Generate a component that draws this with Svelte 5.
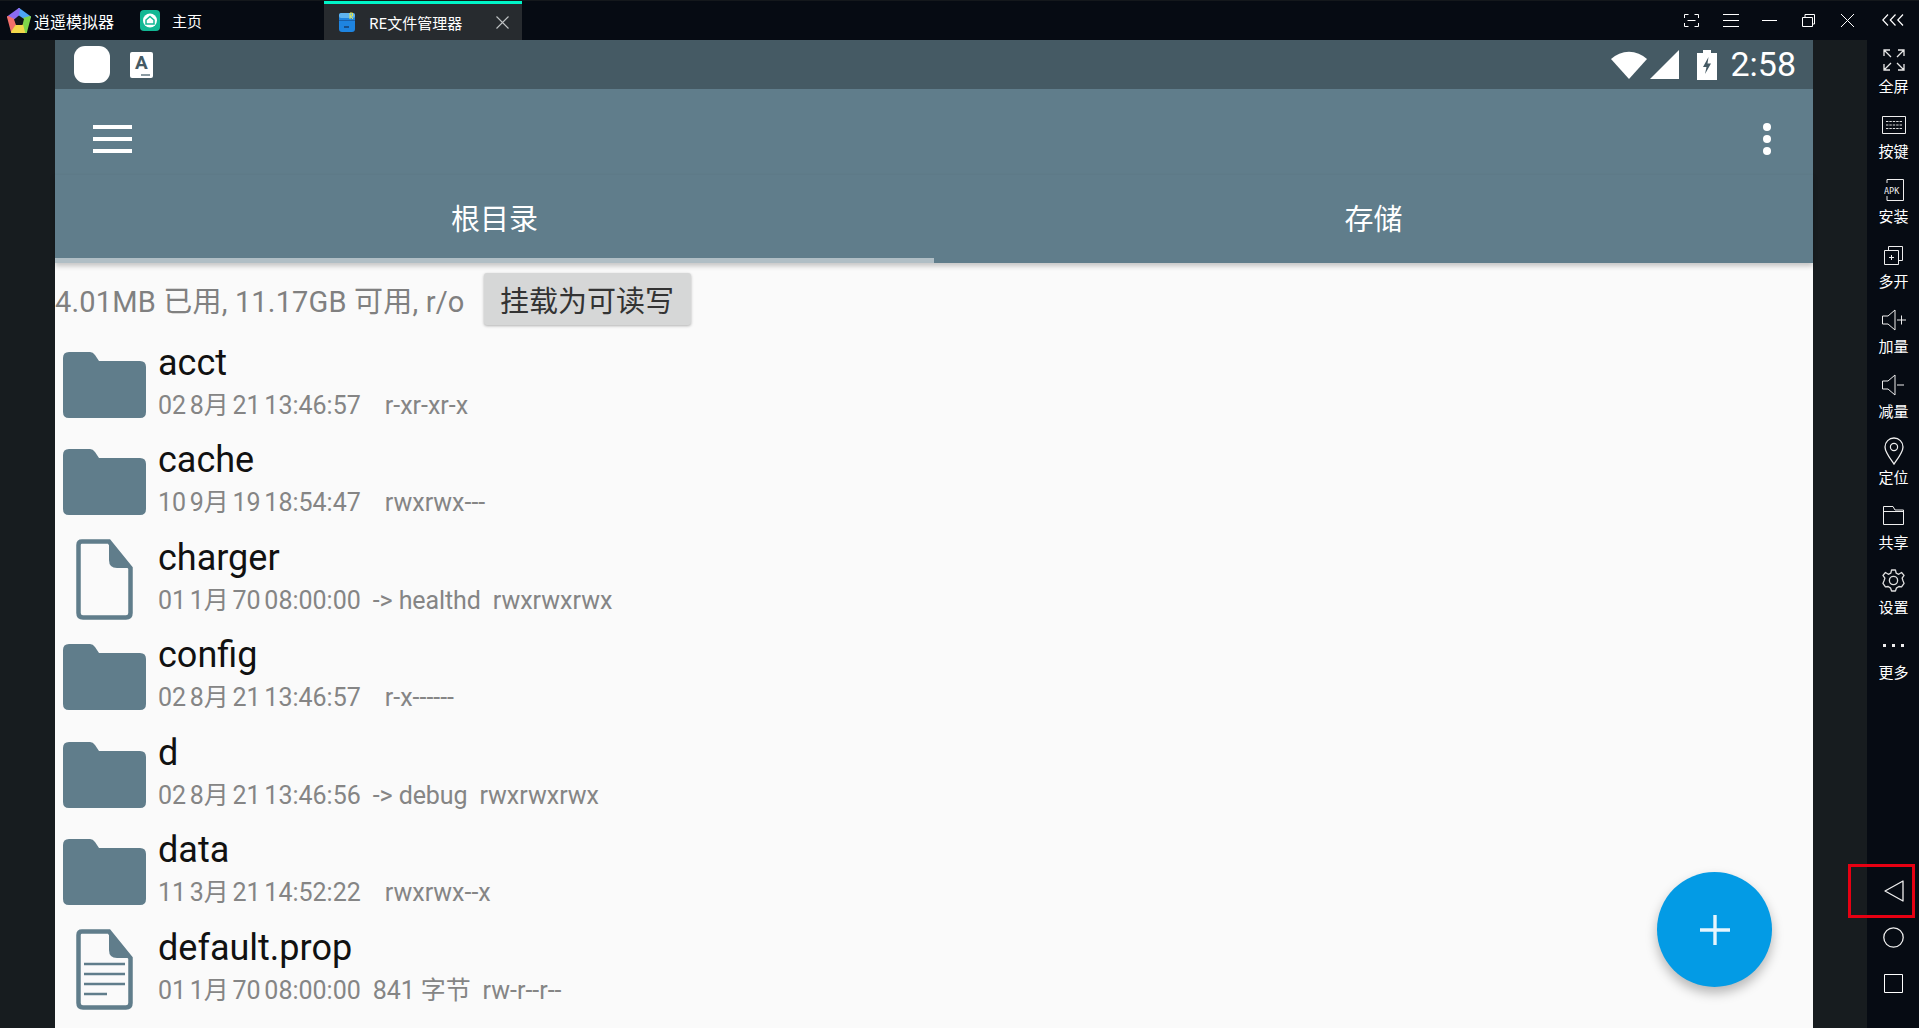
<script>
const rail = [
  { label: '全屏', icon: 'full' },
  { label: '按键', icon: 'keys' },
  { label: '安装', icon: 'apk' },
  { label: '多开', icon: 'multi' },
  { label: '加量', icon: 'volup' },
  { label: '减量', icon: 'voldown' },
  { label: '定位', icon: 'pin' },
  { label: '共享', icon: 'share' },
  { label: '设置', icon: 'gear' },
  { label: '更多', icon: 'more' }
];

const files = [
  { name: 'acct', kind: 'folder', date: '02 8月 21 13:46:57', link: '', perm: 'r-xr-xr-x' },
  { name: 'cache', kind: 'folder', date: '10 9月 19 18:54:47', link: '', perm: 'rwxrwx---' },
  { name: 'charger', kind: 'file', date: '01 1月 70 08:00:00', link: '-> healthd', perm: 'rwxrwxrwx' },
  { name: 'config', kind: 'folder', date: '02 8月 21 13:46:57', link: '', perm: 'r-x------' },
  { name: 'd', kind: 'folder', date: '02 8月 21 13:46:56', link: '-> debug', perm: 'rwxrwxrwx' },
  { name: 'data', kind: 'folder', date: '11 3月 21 14:52:22', link: '', perm: 'rwxrwx--x' },
  { name: 'default.prop', kind: 'text', date: '01 1月 70 08:00:00', link: '841 字节', perm: 'rw-r--r--' }
];
</script>

<div class="emu">
  <header class="topbar">
    <div class="brand">
      <svg class="logo" viewBox="0 0 26 27" width="26" height="27">
        <g stroke-width="2" stroke-linejoin="round">
          <path d="M13 2 L24 10 L17 12 L12 8Z" fill="#4da6f5" stroke="#4da6f5"/>
          <path d="M13 2 L2 10 L8 13 L12 8Z" fill="#8b6cf0" stroke="#8b6cf0"/>
          <path d="M2 10 L6 25 L10 19 L8 13Z" fill="#f2706a" stroke="#f2706a"/>
          <path d="M6 25 L20 25 L18 17 L10 19Z" fill="#f2d84a" stroke="#f2d84a"/>
          <path d="M20 25 L24 10 L17 12 L18 17Z" fill="#7fd64a" stroke="#7fd64a"/>
        </g>
        <path d="M13 8.5 L18 12 L16.5 18 L10 18 L8 12.5Z" fill="#10141a"/>
      </svg>
      <span>逍遥模拟器</span>
    </div>
    <div class="home">
      <svg viewBox="0 0 20 21" width="20" height="21">
        <rect width="20" height="21" rx="4" fill="#12b894"/>
        <circle cx="10" cy="10.5" r="7" fill="#fff"/>
        <path d="M10 6.5 L14 10 V14 H6 V10Z" fill="none" stroke="#12b894" stroke-width="1.5"/>
      </svg>
      <span>主页</span>
    </div>
    <div class="tab">
      <svg viewBox="0 0 16 20" width="16" height="20">
        <rect y="1" width="16" height="19" rx="3" fill="#1e84e0"/>
        <rect y="1" width="16" height="5" rx="2" fill="#5fb4f0"/>
        <rect y="8" width="16" height="1" fill="#1a5fa8"/>
        <rect x="5" y="14" width="5" height="2" fill="#164f8c"/>
        <path d="M11 1 V7 M11 1 h2.5 v3 h-2.5 l3 3" fill="none" stroke="#e8e84a" stroke-width="1"/>
      </svg>
      <span class="tab-title">RE文件管理器</span>
      <svg class="tab-x" viewBox="0 0 13 13" width="13" height="13">
        <path d="M0.5 0.5 L12.5 12.5 M12.5 0.5 L0.5 12.5" stroke="#bfc2c4" stroke-width="1.1"/>
      </svg>
    </div>
    <div class="win">
      <svg viewBox="0 0 15 13" width="15" height="13"><path d="M0.5 4V0.5H4.5 M10.5 0.5H14.5V4 M14.5 9V12.5H10.5 M4.5 12.5H0.5V9 M3.5 6.5H11.5" fill="none" stroke="#fff"/></svg>
      <svg class="w-menu" viewBox="0 0 16 13" width="16" height="13"><path d="M0 .5H16 M0 6.5H16 M0 12.5H16" stroke="#fff"/></svg>
      <svg class="w-min" viewBox="0 0 15 13" width="15" height="13"><path d="M0 6.5H15" stroke="#fff"/></svg>
      <svg class="w-max" viewBox="0 0 13 13" width="13" height="13"><path d="M.5 3.5H10.5V12.5H.5Z M3 3V.5H12.5V10H11" fill="none" stroke="#fff"/></svg>
      <svg class="w-close" viewBox="0 0 13 13" width="13" height="13"><path d="M0 0L13 13M13 0L0 13" stroke="#fff"/></svg>
      <svg class="collapse" viewBox="0 0 22 12" width="22" height="12"><path d="M6 .5L.8 6 6 11.5 M13.5 .5L8.3 6 13.5 11.5 M21 .5L15.8 6 21 11.5" fill="none" stroke="#fff" stroke-width="1.2"/></svg>
    </div>
  </header>

  <div class="main">
    <div class="gutter left"></div>

    <section class="android">
      <div class="status">
        <div class="blank"></div>
        <div class="a-note">
          <b>A</b>
          <i></i>
        </div>
        <div class="status-right">
          <svg viewBox="0 0 36 29" width="36" height="29"><path d="M0 9 A 26 26 0 0 1 36 9 L18 29Z" fill="#fff"/></svg>
          <svg class="signal" viewBox="0 0 29 29" width="29" height="29"><path d="M29 0V29H0Z" fill="#fff"/></svg>
          <svg class="batt" viewBox="0 0 20 30" width="20" height="30">
            <path d="M6 0H14V3H20V30H0V3H6Z" fill="#fff"/>
            <path d="M11.5 7L6 17H9.5L8 24L14 13.5H10.5Z" fill="#455a64"/>
          </svg>
          <span class="clock">2:58</span>
        </div>
      </div>

      <div class="toolbar">
        <div class="burger"><span></span><span></span><span></span></div>
        <div class="kebab"><span></span><span></span><span></span></div>
      </div>

      <div class="tabs">
        <div class="tab-item active">根目录</div>
        <div class="tab-item">存储</div>
      </div>

      <div class="content">
        <div class="info">
          <span class="usage">4.01MB 已用, 11.17GB 可用, r/o</span>
          <button>挂载为可读写</button>
        </div>

        <ul class="list">
          {#each files as f}
            <li>
              <div class="thumb">
                {#if f.kind === 'folder'}
                  <svg viewBox="0 0 83 66" width="83" height="66">
                    <path d="M6 0H27Q30 0 32 3L36 9H77Q83 9 83 15V60Q83 66 77 66H6Q0 66 0 60V6Q0 0 6 0Z" fill="#607d8b"/>
                  </svg>
                {:else}
                  <svg class="doc" viewBox="0 0 57 81" width="57" height="81">
                    <path d="M6 2.5H33L54.5 29V74Q54.5 78.5 50 78.5H7Q2.5 78.5 2.5 74V6Q2.5 2.5 6 2.5Z" fill="#fafafa" stroke="#607d8b" stroke-width="4.5"/>
                    <path d="M33 2L55 29H41Q33 29 33 21Z" fill="#607d8b"/>
                    {#if f.kind === 'text'}
                      <path d="M8 35H49 M8 45H49 M8 55H49 M8 65H31" stroke="#607d8b" stroke-width="2.5"/>
                    {/if}
                  </svg>
                {/if}
              </div>
              <div class="meta">
                <div class="name">{f.name}</div>
                <div class="sub">
                  <span class="date">{f.date}</span>
                  <span class="link">{f.link}</span>
                  <span>{f.perm}</span>
                </div>
              </div>
            </li>
          {/each}
        </ul>

        <div class="fab">
          <svg viewBox="0 0 30 30" width="30" height="30"><path d="M15 0V30M0 15H30" stroke="#e6f5fd" stroke-width="3.4"/></svg>
        </div>
      </div>
    </section>

    <div class="gutter right"></div>

    <aside class="rail">
      <div class="rail-top">
        {#each rail as r}
          <div class="rail-item">
            <div class="rail-icon">
              {#if r.icon === 'full'}
                <svg viewBox="0 0 22 22" width="22" height="22"><path d="M1 7V1H7 M1 1L8 8 M15 1H21V7 M21 1L14 8 M1 15V21H7 M1 21L8 14 M15 21H21V15 M21 21L14 14" fill="none" stroke="#e8e8e8" stroke-width="1.3"/></svg>
              {:else if r.icon === 'keys'}
                <svg viewBox="0 0 24 18" width="24" height="18"><path d="M.5 .5H23.5V17.5H.5Z" fill="none" stroke="#eee"/><path d="M4 5.5H20 M4 9H20 M4 12.5H20" stroke="#ddd" stroke-dasharray="2.4 1"/></svg>
              {:else if r.icon === 'apk'}
                <svg viewBox="0 0 20 22" width="20" height="22">
                  <path d="M3 .5H19.5V21.5H3V17 M3 .5V4" fill="none" stroke="#eee"/>
                  <text x="0" y="15" class="apk">APK</text>
                </svg>
              {:else if r.icon === 'multi'}
                <svg viewBox="0 0 19 19" width="19" height="19"><path d="M.5 4.5H14.5V18.5H.5Z M4.5 4V.5H18.5V14.5H15" fill="none" stroke="#eee"/><path d="M5 11.5H10 M7.5 9V14" stroke="#eee"/></svg>
              {:else if r.icon === 'volup'}
                <svg viewBox="0 0 24 22" width="24" height="22"><path d="M.5 7H6L13 1V21L6 15H.5Z" fill="none" stroke="#eee" stroke-linejoin="round"/><path d="M15 11H24 M19.5 6.5V15.5" stroke="#eee"/></svg>
              {:else if r.icon === 'voldown'}
                <svg viewBox="0 0 24 22" width="24" height="22"><path d="M.5 7H6L13 1V21L6 15H.5Z" fill="none" stroke="#eee" stroke-linejoin="round"/><path d="M15 11H22" stroke="#eee"/></svg>
              {:else if r.icon === 'pin'}
                <svg viewBox="0 0 20 28" width="20" height="28"><path d="M10 27C5 20 1 15 1 10A9 9 0 0 1 19 10C19 15 15 20 10 27Z" fill="none" stroke="#eee" stroke-width="1.3"/><circle cx="10" cy="10" r="3.6" fill="none" stroke="#eee" stroke-width="1.2"/></svg>
              {:else if r.icon === 'share'}
                <svg viewBox="0 0 21 19" width="21" height="19"><path d="M.5 .5H10L12 4H20.5V18.5H.5Z M.5 5.5H20.5" fill="none" stroke="#eee"/></svg>
              {:else if r.icon === 'gear'}
                <svg viewBox="0 0 24 24" width="23" height="23"><path d="M10 1H14L14.8 4.4L17.4 5.5L20.4 3.7L23 6.6L21 9.5L21.8 12L23 15L20.4 18.7L17.6 18.3L15 20L14 23H10L9 20L6.4 18.3L3.6 18.7L1 15L2.2 12L3 9.5L1 6.6L3.6 3.7L6.6 5.5L9.2 4.4Z" fill="none" stroke="#ddd" stroke-width="1.4" stroke-linejoin="round"/><circle cx="12" cy="12" r="4.3" fill="none" stroke="#ddd" stroke-width="1.4"/></svg>
              {:else}
                <svg viewBox="0 0 22 4" width="22" height="4"><path d="M0 0H3V3H0Z M9 0H12V3H9Z M18 0H21V3H18Z" fill="#eee"/></svg>
              {/if}
            </div>
            <span>{r.label}</span>
          </div>
        {/each}
      </div>
      <div class="rail-nav">
        <div class="nav-btn">
          <svg viewBox="0 0 20 22" width="20" height="22"><path d="M1 11L19 1V21Z" fill="none" stroke="#eee" stroke-width="1.3" stroke-linejoin="round"/></svg>
        </div>
        <div class="nav-btn">
          <svg viewBox="0 0 21 21" width="21" height="21"><circle cx="10.5" cy="10.5" r="9.7" fill="none" stroke="#eee" stroke-width="1.3"/></svg>
        </div>
        <div class="nav-btn">
          <svg viewBox="0 0 19 19" width="19" height="19"><path d="M.5 .5H18.5V18.5H.5Z" fill="none" stroke="#fff"/></svg>
        </div>
      </div>
      <div class="marker"></div>
    </aside>
  </div>
</div>

<style>
:global(body) {
  margin: 0;
  overflow: hidden;
  background: #060b13;
}

.emu {
  position: relative;
  width: 1919px;
  height: 1028px;
  display: flex;
  flex-direction: column;
  overflow: hidden;
  font-family: "Noto Sans CJK SC", "Liberation Sans", sans-serif;
  color: #fff;
}

/* top bar */
.topbar {
  height: 40px;
  flex: none;
  display: flex;
  background: #060b13;
  border-top: 1px solid #14181c;
  box-sizing: border-box;
  font-size: 15px;
}
.brand {
  width: 140px;
  display: flex;
  align-items: center;
  padding-left: 6px;
  box-sizing: border-box;
  gap: 2px;
}
.brand span { font-size: 16px; white-space: nowrap; }
.home {
  width: 184px;
  display: flex;
  align-items: center;
  gap: 12px;
}
.tab {
  width: 198px;
  display: flex;
  align-items: center;
  background: #272b2f;
  border-top: 3px solid #00f5c8;
  box-sizing: border-box;
  padding-left: 15px;
}
.tab-title { margin-left: 14px; }
.tab-x { margin-left: 34px; }
.win {
  flex: 1;
  display: flex;
  align-items: center;
  justify-content: flex-end;
  padding: 0 15px 1px 0;
}
.w-menu { margin-left: 24px; }
.w-min { margin-left: 23px; }
.w-max { margin-left: 25px; }
.w-close { margin-left: 26px; }
.collapse { margin-left: 28px; }

/* layout */
.main {
  position: relative;
  flex: 1;
  display: flex;
  min-height: 0;
}
.gutter { background: #171c1f; flex: none; }
.gutter.left { width: 55px; }
.gutter.right { width: 54px; }

/* android screen */
.android {
  flex: 1;
  min-width: 0;
  display: flex;
  flex-direction: column;
  background: #fafafa;
  font-family: Roboto, "Noto Sans CJK SC", sans-serif;
}
.status {
  height: 49px;
  flex: none;
  background: #455a64;
  display: flex;
  align-items: center;
  padding: 0 17px 0 19px;
}
.blank {
  width: 36px;
  height: 37px;
  background: #fff;
  border-radius: 11px;
}
.a-note {
  position: relative;
  margin-left: 20px;
  width: 23px;
  height: 26px;
  background: #fff;
  border-radius: 2px;
  color: #455a64;
  text-align: center;
}
.a-note b {
  display: block;
  font-size: 19px;
  line-height: 22px;
}
.a-note i {
  position: absolute;
  right: 3px;
  bottom: 2px;
  width: 9px;
  height: 2px;
  background: #8a9aa2;
}
.status-right {
  margin-left: auto;
  display: flex;
  align-items: center;
}
.signal { margin-left: 3px; }
.batt { margin-left: 18px; }
.clock {
  margin-left: 13.5px;
  font-size: 34px;
  line-height: 49px;
}

.toolbar {
  height: 86px;
  flex: none;
  background: #607d8b;
  display: flex;
  align-items: center;
  justify-content: space-between;
  padding: 14px 42px 0 38px;
  box-sizing: border-box;
}
.burger { display: flex; flex-direction: column; gap: 8px; }
.burger span { width: 39px; height: 4px; background: #fff; }
.kebab { display: flex; flex-direction: column; gap: 4px; }
.kebab span { width: 8px; height: 8px; border-radius: 50%; background: #fff; }

.tabs {
  height: 88px;
  flex: none;
  display: flex;
  background: #607d8b;
  box-shadow: 0 3px 5px rgba(0, 0, 0, 0.22);
  position: relative;
  z-index: 1;
}
.tab-item {
  flex: 1;
  display: flex;
  align-items: center;
  justify-content: center;
  font-size: 29px;
  box-sizing: border-box;
  padding-bottom: 4px;
}
.tab-item.active { box-shadow: inset 0 -5px 0 #b0bec5; }

.content {
  position: relative;
  flex: 1;
  min-height: 0;
}
.info {
  display: flex;
  align-items: center;
  height: 69px;
  padding-top: 3px;
  box-sizing: border-box;
  color: #808080;
  font-size: 29px;
}
.usage { white-space: nowrap; letter-spacing: 0.17px; }
button {
  margin-left: 19px;
  width: 207px;
  height: 52px;
  flex: none;
  border: 0;
  border-radius: 3px;
  background: #d6d7d7;
  color: #333;
  font: inherit;
  font-size: 29px;
  padding: 0;
  box-shadow: 0 1px 3px rgba(0, 0, 0, 0.3);
}

.list {
  list-style: none;
  margin: 0;
  padding: 0;
}
li {
  height: 97.5px;
  display: flex;
  align-items: center;
}
.thumb {
  width: 99px;
  margin-right: 4px;
  display: flex;
  justify-content: center;
  flex: none;
  padding-top: 8px;
}
.thumb svg { display: block; }
.name {
  color: #111;
  font-size: 36px;
  line-height: 48px;
  margin-bottom: 2px;
}
.sub {
  color: #858585;
  font-size: 25px;
  line-height: 34px;
  display: flex;
  gap: 12px;
  white-space: nowrap;
}
.date { word-spacing: -2.5px; }
.link { letter-spacing: -0.1px; }
.link:empty { width: 0; }

.fab {
  position: absolute;
  right: 41px;
  top: 609px;
  width: 115px;
  height: 115px;
  border-radius: 50%;
  background: #039be5;
  display: flex;
  align-items: center;
  justify-content: center;
  box-shadow: 0 6px 12px rgba(0, 0, 0, 0.28);
}

/* right rail */
.rail {
  width: 52px;
  padding-left: 1px;
  box-sizing: border-box;
  flex: none;
  background: #060b13;
  display: flex;
  flex-direction: column;
  justify-content: space-between;
}
.rail-top { padding-top: 5px; }
.rail-item {
  height: 65.1px;
  display: flex;
  flex-direction: column;
  align-items: center;
  font-size: 15px;
}
.rail-icon {
  height: 30px;
  display: flex;
  align-items: center;
  justify-content: center;
}
.rail-item span { line-height: 22px; }
.apk {
  font-family: "DejaVu Sans Mono", monospace;
  font-size: 8.5px;
  fill: #eee;
}
.rail-nav { padding-bottom: 22px; }
.nav-btn {
  height: 46px;
  display: flex;
  align-items: center;
  justify-content: center;
}
.marker {
  position: absolute;
  right: 4px;
  top: 824px;
  width: 67px;
  height: 54px;
  box-sizing: border-box;
  border: 3px solid #e60012;
}
</style>
